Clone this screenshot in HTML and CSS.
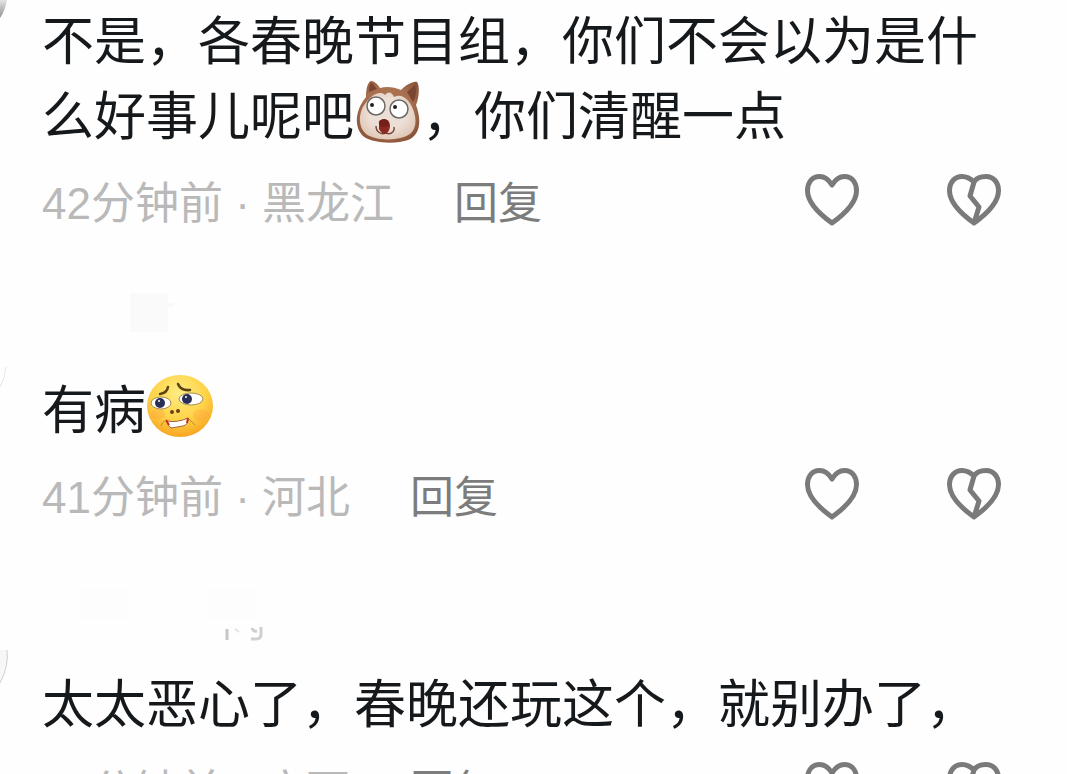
FILE: index.html
```
<!DOCTYPE html>
<html lang="zh-CN">
<head>
    <meta charset="UTF-8">
    <meta name="viewport" content="width=device-width, initial-scale=1.0">
    <title>评论</title>
    <link rel="stylesheet" href="styles.css">
</head>
<body>
    <!-- shared icons -->
    <svg class="sprite" aria-hidden="true">
        <symbol id="heart" viewBox="0 0 56 54">
            <path d="M28 12C25 7 21 3.500 15.500 3.500C8 3.500 3.500 9.500 3.500 17.500C3.500 29 14 40 28 50C42 40 52.500 29 52.500 17.500C52.500 9.500 48 3.500 40.500 3.500C35 3.500 31 7 28 12Z"/>
        </symbol>
        <symbol id="broken-heart" viewBox="0 0 56 54">
            <path d="M28 9C24 5 20 3.500 16 3.500C8.500 3.500 3.500 9.500 3.500 17.500C3.500 29 14 40 28 50C42 40 52.500 29 52.500 17.500C52.500 9.500 47.500 3.500 40 3.500C34.500 3.500 30 5.500 28 9L24 23L33 34L28 50"/>
        </symbol>
    </svg>

    <main class="comments">
        <article class="comment">
            <svg class="avatar avatar-top" viewBox="0 0 10 40" aria-hidden="true">
                <defs>
                    <linearGradient id="photo" x1="0" y1="0" x2="0" y2="1">
                        <stop offset="0%" stop-color="#e4e4e4"/>
                        <stop offset="100%" stop-color="#8f8f8f"/>
                    </linearGradient>
                </defs>
                <path d="M0 0H7Q5 11 0 18Z" fill="url(#photo)"/>
            </svg>
            <p class="text">不是，各春晚节目组，你们不会以为是什么好事儿呢吧<svg class="emoji" viewBox="0 0 68 68" role="img" aria-label="狗">
                    <defs>
                        <radialGradient id="fur" cx="50%" cy="45%" r="60%">
                            <stop offset="60%" stop-color="#a97150"/>
                            <stop offset="100%" stop-color="#8a5439"/>
                        </radialGradient>
                        <radialGradient id="muzzle" cx="50%" cy="45%" r="60%">
                            <stop offset="55%" stop-color="#ecdfd6"/>
                            <stop offset="100%" stop-color="#dfc5b3"/>
                        </radialGradient>
                    </defs>
                    <path d="M12 19C12 10 14 4 17 3C21 3 24 7 26 10C33 8 40 9 47 12C52 7 59 3 63 4C66 8 65 20 62 27C68 43 66 57 54 62C43 66 19 66 9 58C-1 48 2 31 12 19Z" fill="url(#fur)"/>
                    <path d="M15 14C15 9 16 5 18 5L23 11ZM53 14L61 7C63 12 62 20 59 24Z" fill="#7b4631"/>
                    <path d="M31 17C34 13 38 14 40 19C49 14 57 24 60 34C64 47 60 56 50 59C38 63 20 62 12 56C4 49 4 35 11 26C17 17 26 12 31 17Z" fill="url(#muzzle)"/>
                    <circle cx="22" cy="28" r="9" fill="#fff" stroke="#6d6867" stroke-width="1.500"/>
                    <circle cx="45" cy="31" r="9" fill="#fff" stroke="#6d6867" stroke-width="1.500"/>
                    <circle cx="18" cy="27" r="2" fill="#252020"/>
                    <circle cx="41" cy="29" r="2" fill="#252020"/>
                    <path d="M22 48C22 54 27 57 32 55C36 57 41 54 40 49" fill="none" stroke="#79483a" stroke-width="1.500"/>
                    <path d="M25 46C24 42 28 41 32 42C37 43 37 50 34 54C31 58 27 55 25 51Z" fill="#8b2920"/>
                    <ellipse cx="30" cy="45" rx="5" ry="4" fill="#742018"/>
                </svg>，你们清醒一点</p>
            <div class="meta">
                <span class="info">42分钟前 · 黑龙江</span>
                <button class="reply" type="button">回复</button>
                <div class="actions">
                    <button class="action" type="button" aria-label="喜欢"><svg><use href="#heart"/></svg></button>
                    <button class="action" type="button" aria-label="不喜欢"><svg><use href="#broken-heart"/></svg></button>
                </div>
            </div>
        </article>

        <article class="comment">
            <svg class="avatar" viewBox="0 0 10 40" aria-hidden="true">
                <path d="M6 11Q5 22 0 31" fill="none" stroke="#e6e6e6"/>
            </svg>
            <div class="name">
                <svg viewBox="0 0 300 64" aria-hidden="true">
                    <path d="M88 9H126V19H132V23H126V48H88Z" fill="#fafafa"/>
                </svg>
            </div>
            <p class="text">有病<svg class="emoji" viewBox="0 0 68 68" role="img" aria-label="难过">
                    <defs>
                        <radialGradient id="face" cx="48%" cy="30%" r="68%">
                            <stop offset="0%" stop-color="#ffec83"/>
                            <stop offset="60%" stop-color="#fed449"/>
                            <stop offset="100%" stop-color="#f8a823"/>
                        </radialGradient>
                    </defs>
                    <ellipse cx="34" cy="34" rx="33" ry="31" fill="url(#face)"/>
                    <ellipse cx="55" cy="43" rx="8" ry="6" fill="#ff9c42" opacity=".3"/>
                    <ellipse cx="12" cy="42" rx="7" ry="5" fill="#ff9c42" opacity=".3"/>
                    <ellipse cx="15" cy="31" rx="10" ry="6" fill="#fff" stroke="#a58c55"/>
                    <ellipse cx="45" cy="27" rx="12" ry="6" fill="#fff" stroke="#a58c55"/>
                    <circle cx="14" cy="31" r="5" fill="#292f55"/>
                    <circle cx="41" cy="27" r="5" fill="#292f55"/>
                    <circle cx="13" cy="29" r="1" fill="#fff"/>
                    <circle cx="40" cy="25" r="1" fill="#fff"/>
                    <path d="M14 22Q21 21 22 15M32 12Q35 19 44 18" fill="none" stroke="#5b4212" stroke-width="2.500" stroke-linecap="round"/>
                    <circle cx="26" cy="40" r="2" fill="#704114"/>
                    <circle cx="32" cy="39" r="2" fill="#704114"/>
                    <path d="M21 49Q31 51 42 46Q42 53 37 54L25 56Q22 54 21 49Z" fill="#fff" stroke="#9e6644"/>
                    <path d="M20 48L23 53M42 46L41 51" stroke="#c72d20" stroke-width="2"/>
                    <path d="M15 54Q16 50 19 49M43 47L49 53" fill="none" stroke="#c98629"/>
                </svg></p>
            <div class="meta">
                <span class="info">41分钟前 · 河北</span>
                <button class="reply" type="button">回复</button>
                <div class="actions">
                    <button class="action" type="button" aria-label="喜欢"><svg><use href="#heart"/></svg></button>
                    <button class="action" type="button" aria-label="不喜欢"><svg><use href="#broken-heart"/></svg></button>
                </div>
            </div>
        </article>

        <article class="comment">
            <svg class="avatar" viewBox="0 0 10 40" aria-hidden="true">
                <path d="M7 0Q9 16 0 33V0Z" fill="#f7f7f7"/>
                <path d="M7 0Q9 16 0 33" fill="none" stroke="#cfcfcf"/>
            </svg>
            <div class="name">
                <svg viewBox="0 0 300 64" aria-hidden="true">
                    <path d="M39 10H86V42H39ZM167 10H214V42H167Z" fill="#fdfdfd"/>
                    <path d="M185 51V62" stroke="#c6c6c6" stroke-width="3"/>
                    <path d="M193 51L197 54" stroke="#e3e3e3" stroke-width="2"/>
                    <path d="M210 50Q211 54 215 53M219 49V56Q219 61 214 61H209" fill="none" stroke="#cfcfcf" stroke-width="3"/>
                </svg>
            </div>
            <p class="text">太太恶心了，春晚还玩这个，就别办了，</p>
            <div class="meta">
                <span class="info">40分钟前 · 广西</span>
                <button class="reply" type="button">回复</button>
                <div class="actions">
                    <button class="action" type="button" aria-label="喜欢"><svg><use href="#heart"/></svg></button>
                    <button class="action" type="button" aria-label="不喜欢"><svg><use href="#broken-heart"/></svg></button>
                </div>
            </div>
        </article>
    </main>
</body>
</html>
```
FILE: styles.css
```
* {
    box-sizing: border-box;
}

body {
    margin: 0;
    height: 100vh;
    overflow: hidden;
    background: #fefefe;
    color: #16191c;
    font-family: "Noto Sans CJK SC", sans-serif;
}

.sprite {
    display: none;
}

.comments {
    display: flex;
    flex-direction: column;
    gap: 52px;
}

.comment {
    position: relative;
    padding: 0 65px 0 42px;
}

/* edge of the round avatar that sticks in from the left */
.avatar {
    position: absolute;
    left: 0;
    top: 72px;
    width: 10px;
    height: 40px;
}

.avatar-top {
    top: 0;
}

.name {
    height: 85px;
}

.name svg {
    display: block;
    width: 300px;
    height: 64px;
}

.text {
    margin: 0;
    font-size: 52px;
    line-height: 75px;
}

.emoji {
    width: 68px;
    height: 68px;
    vertical-align: -3px;
    margin: -8px 0;
}

.meta {
    display: flex;
    align-items: baseline;
    height: 64px;
    margin-top: 18px;
    font-size: 44px;
    line-height: 64px;
}

.info {
    color: #b9b9b9;
    font-family: "Liberation Sans", "Noto Sans CJK SC", sans-serif;
}

.reply {
    margin-left: 60px;
    padding: 0;
    border: 0;
    background: none;
    color: #7c7c7c;
    font: inherit;
    cursor: pointer;
}

.actions {
    display: flex;
    align-self: center;
    gap: 86px;
    margin-left: auto;
}

.action {
    padding: 0;
    border: 0;
    background: none;
    cursor: pointer;
}

.action svg {
    display: block;
    width: 56px;
    height: 54px;
    fill: none;
    stroke: #7a7a7a;
    stroke-width: 5px;
    stroke-linejoin: round;
}
```
